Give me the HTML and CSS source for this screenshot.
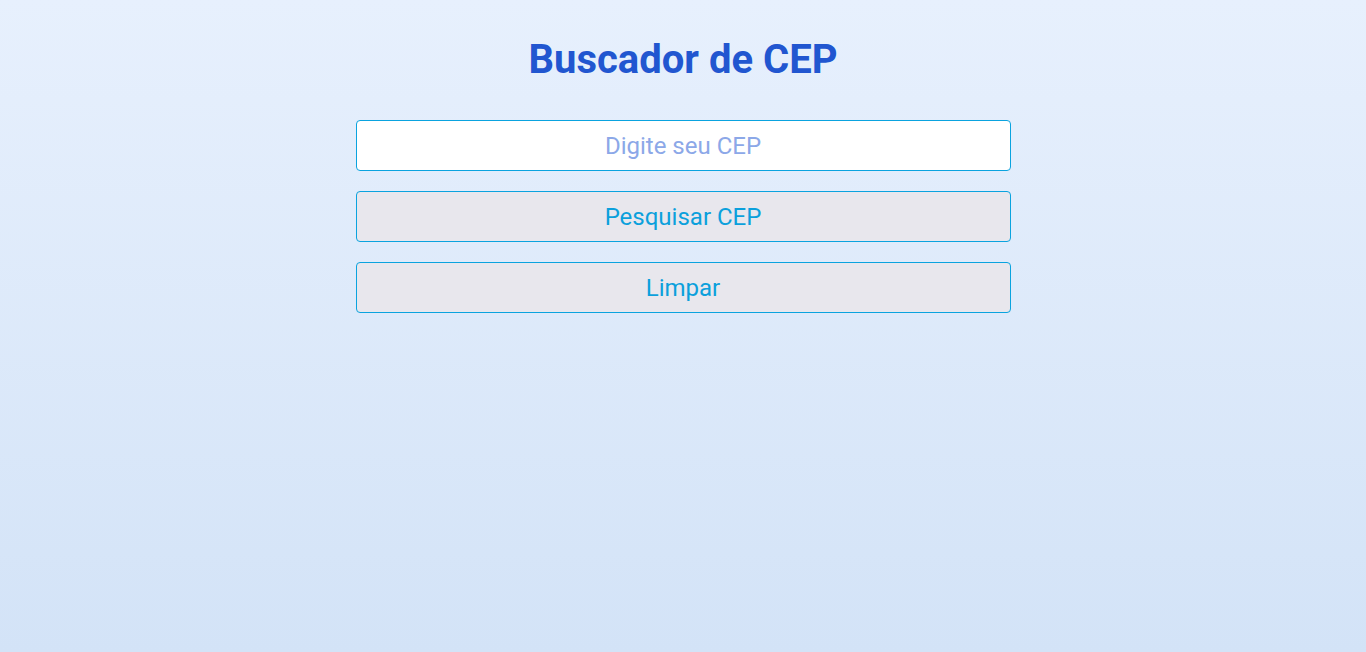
FILE: index.html
```html
<!DOCTYPE html>
<html lang="pt-BR">
<head>
<meta charset="utf-8">
<title>Buscador de CEP</title>
<link rel="stylesheet" href="styles.css">
</head>
<body>
<main class="app">
  <h1 class="title">Buscador de CEP</h1>
  <form class="form">
    <input class="field" type="text" placeholder="Digite seu CEP">
    <button class="btn" type="button">Pesquisar CEP</button>
    <button class="btn" type="button">Limpar</button>
  </form>
</main>
</body>
</html>
```
FILE: styles.css
```css
html, body {
  margin: 0;
  height: 100%;
}
body {
  background: linear-gradient(to bottom, #e7f0fd, #d3e3f7);
  font-family: Roboto, "Noto Sans", sans-serif;
}
.app {
  display: flex;
  flex-direction: column;
  align-items: center;
  padding-top: 36px;
}
.title {
  margin: 0;
  font-size: 40px;
  font-weight: 700;
  line-height: 48px;
  color: #2156d0;
}
.form {
  display: flex;
  flex-direction: column;
  gap: 20px;
  width: 655px;
  margin-top: 36px;
}
.field, .btn {
  box-sizing: border-box;
  height: 51px;
  width: 100%;
  border: 1px solid #0aa3df;
  border-radius: 4px;
  font-family: Roboto, sans-serif;
  font-size: 24px;
  text-align: center;
  padding: 0;
  margin: 0;
  outline: none;
}
.field {
  background: #ffffff;
  color: #333;
}
.field::placeholder {
  color: #8ca8e8;
  opacity: 1;
}
.btn {
  background: #e8e7ed;
  color: #0ba0dc;
  cursor: pointer;
}
```
